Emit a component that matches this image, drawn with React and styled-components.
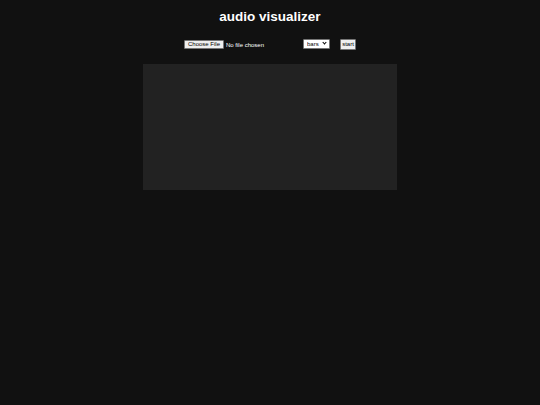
import React, { useState } from "react";
import styled, { createGlobalStyle } from "styled-components";

const GlobalStyle = createGlobalStyle`
  html, body {
    margin: 0;
    padding: 0;
    background: #111111;
  }
  body {
    font-family: "Liberation Sans", Arial, sans-serif;
    color: #ffffff;
  }
`;

const Page = styled.div`
  display: flex;
  flex-direction: column;
  align-items: center;
  min-height: 405px;
  padding-top: 9px;
  box-sizing: border-box;
`;

const Title = styled.h1`
  margin: 0;
  font-size: 13.5px;
  line-height: 16px;
  font-weight: 700;
  color: #ffffff;
`;

const Controls = styled.div`
  display: flex;
  align-items: center;
  gap: 10px;
  margin-top: 14px;
  height: 10px;
`;

const FileInput = styled.input`
  width: 109px;
  font-family: "Liberation Sans", Arial, sans-serif;
  font-size: 6px;
  color: #ffffff;

  &::file-selector-button {
    font-family: "Liberation Sans", Arial, sans-serif;
    font-size: 6px;
    height: 9px;
    padding: 0 3px;
    margin-right: 2px;
    background: #efefef;
    color: #000000;
    border: 1px solid #767676;
    border-radius: 1px;
  }
`;

const SelectWrap = styled.div`
  position: relative;
  width: 27px;
  height: 10px;

  &::after {
    content: "";
    position: absolute;
    right: 4px;
    top: 2px;
    width: 2px;
    height: 2px;
    border-right: 1px solid #000;
    border-bottom: 1px solid #000;
    transform: rotate(45deg);
    pointer-events: none;
  }
`;

const Select = styled.select`
  display: block;
  box-sizing: border-box;
  appearance: none;
  width: 27px;
  height: 10px;
  padding: 0 0 0 3px;
  font-family: "Liberation Sans", Arial, sans-serif;
  font-size: 6px;
  line-height: 8px;
  background: #ffffff;
  color: #000000;
  border: 1px solid #767676;
  border-radius: 1px;
  outline: none;
`;

const StartButton = styled.button`
  box-sizing: border-box;
  width: 16px;
  height: 11px;
  padding: 0;
  font-family: "Liberation Sans", Arial, sans-serif;
  font-size: 6px;
  background: #efefef;
  color: #000000;
  border: 1px solid #767676;
  border-radius: 1px;
`;

const Canvas = styled.canvas`
  display: block;
  margin-top: 15px;
  width: 254px;
  height: 126px;
  background: #222222;
`;

const App = () => {
  const [mode, setMode] = useState("bars"); // 시각화 모드

  return (
    <>
      <GlobalStyle />
      <Page>
        <Title>audio visualizer</Title>
        <Controls>
          <FileInput type="file" accept="audio/*" />
          <SelectWrap>
            <Select value={mode} onChange={(e) => setMode(e.target.value)}>
              <option value="bars">bars</option>
              <option value="wave">wave</option>
              <option value="circle">circle</option>
            </Select>
          </SelectWrap>
          <StartButton>start</StartButton>
        </Controls>
        <Canvas width={508} height={252} />
      </Page>
    </>
  );
};

export default App;
